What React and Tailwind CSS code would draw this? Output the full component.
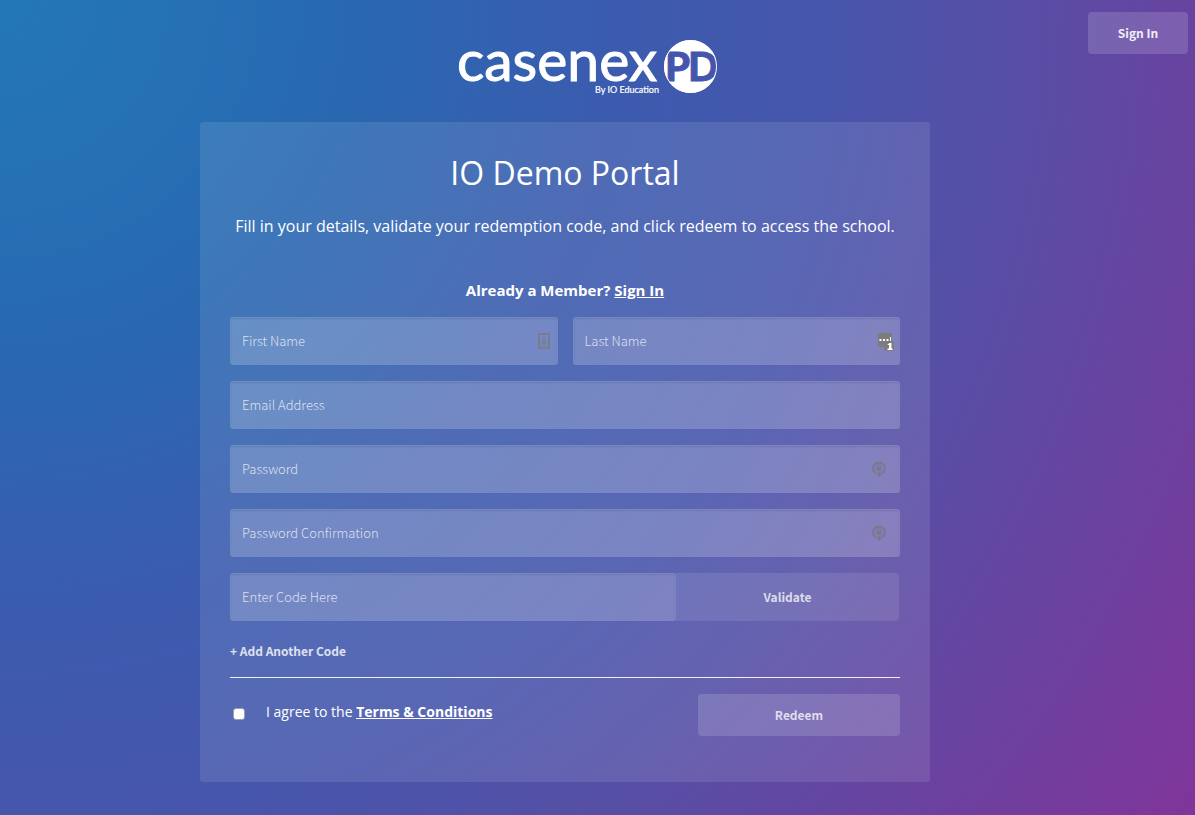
import React from "react";

const field =
  "block h-12 w-full rounded-[3px] border border-transparent bg-white/20 px-[11px] pb-0.5 font-['Noto_Sans_CJK_SC',sans-serif] text-[13px] font-light text-white shadow-[inset_0_1px_2px_rgba(0,0,0,0.1)] outline-none placeholder:text-white/75 focus:bg-white/30";

function Logo() {
  return (
    <svg viewBox="0 0 260 58" className="h-[58px] w-[260px] overflow-visible" role="img" aria-label="casenex PD by IO Education">
      <text x="-1" y="42" fill="#fff" stroke="#fff" strokeWidth="1" fontFamily="Lato, sans-serif" fontSize="57">
        casenex
      </text>
      <circle cx="232.500" cy="27.500" r="26.500" fill="#fff" />
      <g fill="#4456ac" stroke="#4456ac" strokeWidth="0.800" fontFamily="Lato, sans-serif" fontSize="40" fontWeight="900">
        <text x="207" y="42">P</text>
        <text x="230" y="42">D</text>
      </g>
      <circle cx="232.500" cy="27.500" r="26" fill="none" stroke="#fff" strokeWidth="1" />
      <text x="137" y="54" fill="#fff" stroke="#fff" strokeWidth="0.200" fontFamily="Lato, sans-serif" fontSize="9">
        By IO Education
      </text>
    </svg>
  );
}

function ContactIcon() {
  return (
    <svg viewBox="0 0 12 16" className="h-4 w-3" fill="none" stroke="#7a7b8c" aria-hidden="true">
      <rect x="1" y="1" width="10" height="14" strokeWidth="2" />
      <path d="M6 3L8.200 8.500H3.800Z" fill="#7a7b8c" stroke="none" />
      <path d="M3.500 10.500H8.500M4 12.500H8" />
    </svg>
  );
}

function FillIcon() {
  return (
    <svg viewBox="0 0 16 18" className="h-[18px] w-4" aria-hidden="true">
      <path d="M2 0H12Q14 0 14 2V8H16V16Q16 18 14 18H8Q6 18 6 14H2Q0 14 0 12V2Q0 0 2 0Z" fill="#7c7c7c" />
      <path d="M1.500 6H3.500V8H1.500ZM5 6H7V8H5ZM8.500 6H10.500V8H8.500ZM12 4H13V8H12ZM9.500 11.500L11.500 10H13.500V15.500H14.500V17H9.500V15.500H11V12H9.500Z" fill="#fff" />
    </svg>
  );
}

function LockIcon() {
  return (
    <svg viewBox="0 0 14 16" className="h-4 w-3.5" fill="none" stroke="#7a788c" aria-hidden="true">
      <path d="M4 12.300A5.800 5.800 0 1 1 10 12.300" strokeWidth="2" />
      <path d="M7 10.500L10 13L7 16L4.500 13.500Z" fill="#7a788c" stroke="none" />
      <path d="M5.500 6V5A1.500 1.500 0 0 1 8.500 5V6" strokeWidth="1.200" />
      <rect x="4.500" y="6" width="5" height="4" fill="#7a788c" stroke="none" />
    </svg>
  );
}

function Field({ label, type = "text", icon, inset = "right-3.5" }) {
  return (
    <div className="relative">
      <input className={field} type={type} placeholder={label} aria-label={label} />
      {icon && <span className={"pointer-events-none absolute top-4 " + inset}>{icon}</span>}
    </div>
  );
}

export default function App() {
  return (
    <div className="flex min-h-screen flex-col bg-[radial-gradient(circle_farthest-corner_at_0_0,#2377b7_0%,#2571b4_12%,#2968b1_25%,#3c5bae_43%,#4656ac_57%,#5450a6_68%,#6b419f_85%,#80359a_100%)] font-['Open_Sans',sans-serif] text-white">
      <header className="flex justify-end px-[7px] pt-3">
        <button type="button" className="h-[42px] w-[100px] rounded bg-white/15 font-['Noto_Sans_CJK_SC',sans-serif] text-xs font-bold text-white/90">
          Sign In
        </button>
      </header>
      <main className="-mt-[15px] flex w-full flex-col items-center pr-[65px]">
        <div className="pl-[46px]">
          <Logo />
        </div>
        <form className="mt-[25px] w-full max-w-[730px] rounded-[3px] bg-white/10 px-[30px] pb-[46px] pt-[27px]" onSubmit={(e) => e.preventDefault()}>
          <h1 className="text-center text-[32px] leading-[48px]">IO Demo Portal</h1>
          <p className="mt-[15px] text-center text-base leading-7">
            Fill in your details, validate your redemption code, and click redeem to access the school.
          </p>
          <p className="mb-[15px] mt-[38px] text-center text-[15px] font-bold leading-6">
            Already a Member? <a href="#signin" className="underline">Sign In</a>
          </p>
          <div className="flex flex-col gap-4">
            <div className="grid grid-cols-2 gap-[15px]">
              <Field label="First Name" icon={<ContactIcon />} inset="right-2" />
              <Field label="Last Name" icon={<FillIcon />} inset="right-1.5" />
            </div>
            <Field label="Email Address" type="email" />
            <Field label="Password" type="password" icon={<LockIcon />} />
            <Field label="Password Confirmation" type="password" icon={<LockIcon />} />
            <div className="grid grid-cols-3 pr-px">
              <div className="col-span-2">
                <Field label="Enter Code Here" />
              </div>
              <button type="button" className="rounded-r bg-white/10 font-['Noto_Sans_CJK_SC',sans-serif] text-xs font-bold text-white/75">
                Validate
              </button>
            </div>
          </div>
          <button type="button" className="mt-5 block font-['Noto_Sans_CJK_SC',sans-serif] text-xs font-bold leading-5 text-white/80">
            + Add Another Code
          </button>
          <hr className="mt-4 border-white/90" />
          <div className="mt-4 flex items-start justify-between">
            <label className="flex items-center pl-[3px] pt-1.5 text-sm leading-6">
              <input type="checkbox" className="mr-[21px] mt-1 size-3 appearance-none rounded-[3px] border border-gray-400 bg-white checked:bg-blue-500" />
              <span>
                I agree to the <a href="#terms" className="font-bold underline">Terms &amp; Conditions</a>
              </span>
            </label>
            <button type="submit" className="h-[42px] w-[202px] rounded bg-white/15 font-['Noto_Sans_CJK_SC',sans-serif] text-xs font-bold text-white/75">
              Redeem
            </button>
          </div>
        </form>
      </main>
    </div>
  );
}
